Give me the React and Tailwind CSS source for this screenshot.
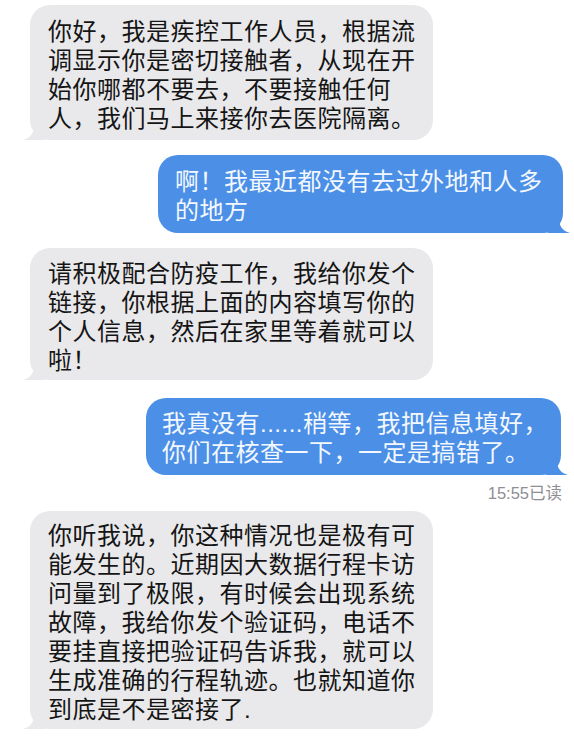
import React from 'react'

const font = "font-['Liberation_Sans','Noto_Sans_CJK_SC',sans-serif]"

function TailLeft() {
  return (
    <svg className="absolute left-[-7px] bottom-0" width="22" height="20" viewBox="0 0 22 20">
      <path d="M22 0 L22 20 L0 20 C8 18 12 12 12 0 Z" fill="#e9e9eb" />
    </svg>
  )
}

function TailRight() {
  return (
    <svg className="absolute right-[-7px] bottom-0" width="22" height="20" viewBox="0 0 22 20">
      <path d="M0 0 L0 20 L22 20 C14 18 10 12 10 0 Z" fill="#4b8fe6" />
    </svg>
  )
}

function Incoming({ lines, className }) {
  return (
    <div className={`relative self-start ml-[30px] w-[403px] rounded-[20px] bg-[#e9e9eb] pl-[18px] text-[24px] leading-[29px] tracking-[0.5px] text-[#151515] ${className}`}>
      <TailLeft />
      <div className="relative">
        {lines.map((l, i) => (
          <div key={i} className="whitespace-nowrap">{l}</div>
        ))}
      </div>
    </div>
  )
}

function Outgoing({ lines, className }) {
  return (
    <div className={`relative self-end rounded-[20px] bg-[#4b8fe6] text-[24px] leading-[29px] tracking-[0.5px] text-[#f3f8ff] ${className}`}>
      <TailRight />
      <div className="relative">
        {lines.map((l, i) => (
          <div key={i} className="whitespace-nowrap">{l}</div>
        ))}
      </div>
    </div>
  )
}

export default function App() {
  return (
    <div className={`w-[574px] h-[745px] overflow-hidden bg-white flex flex-col ${font}`}>
      <Incoming
        className="mt-[5px] pt-[12px] pb-[7px]"
        lines={[
          '你好，我是疾控工作人员，根据流',
          '调显示你是密切接触者，从现在开',
          '始你哪都不要去，不要接触任何',
          '人，我们马上来接你去医院隔离。',
        ]}
      />
      <Outgoing
        className="mt-[15px] mr-[11px] w-[405px] pl-[17px] pt-[12px] pb-[8px]"
        lines={['啊！我最近都没有去过外地和人多', '的地方']}
      />
      <Incoming
        className="mt-[15px] pt-[11px] pb-[5px]"
        lines={[
          '请积极配合防疫工作，我给你发个',
          '链接，你根据上面的内容填写你的',
          '个人信息，然后在家里等着就可以',
          '啦！',
        ]}
      />
      <Outgoing
        className="mt-[18px] mr-[13px] w-[415px] pl-[16px] pt-[11px] pb-[8px]"
        lines={['我真没有......稍等，我把信息填好，', '你们在核查一下，一定是搞错了。']}
      />
      <div className="self-end mr-[12px] mt-[8px] text-[16.5px] leading-[20px] text-[#8e8e93]">15:55已读</div>
      <Incoming
        className="mt-[8px] pt-[10px] pb-[5px]"
        lines={[
          '你听我说，你这种情况也是极有可',
          '能发生的。近期因大数据行程卡访',
          '问量到了极限，有时候会出现系统',
          '故障，我给你发个验证码，电话不',
          '要挂直接把验证码告诉我，就可以',
          '生成准确的行程轨迹。也就知道你',
          '到底是不是密接了.',
        ]}
      />
    </div>
  )
}
